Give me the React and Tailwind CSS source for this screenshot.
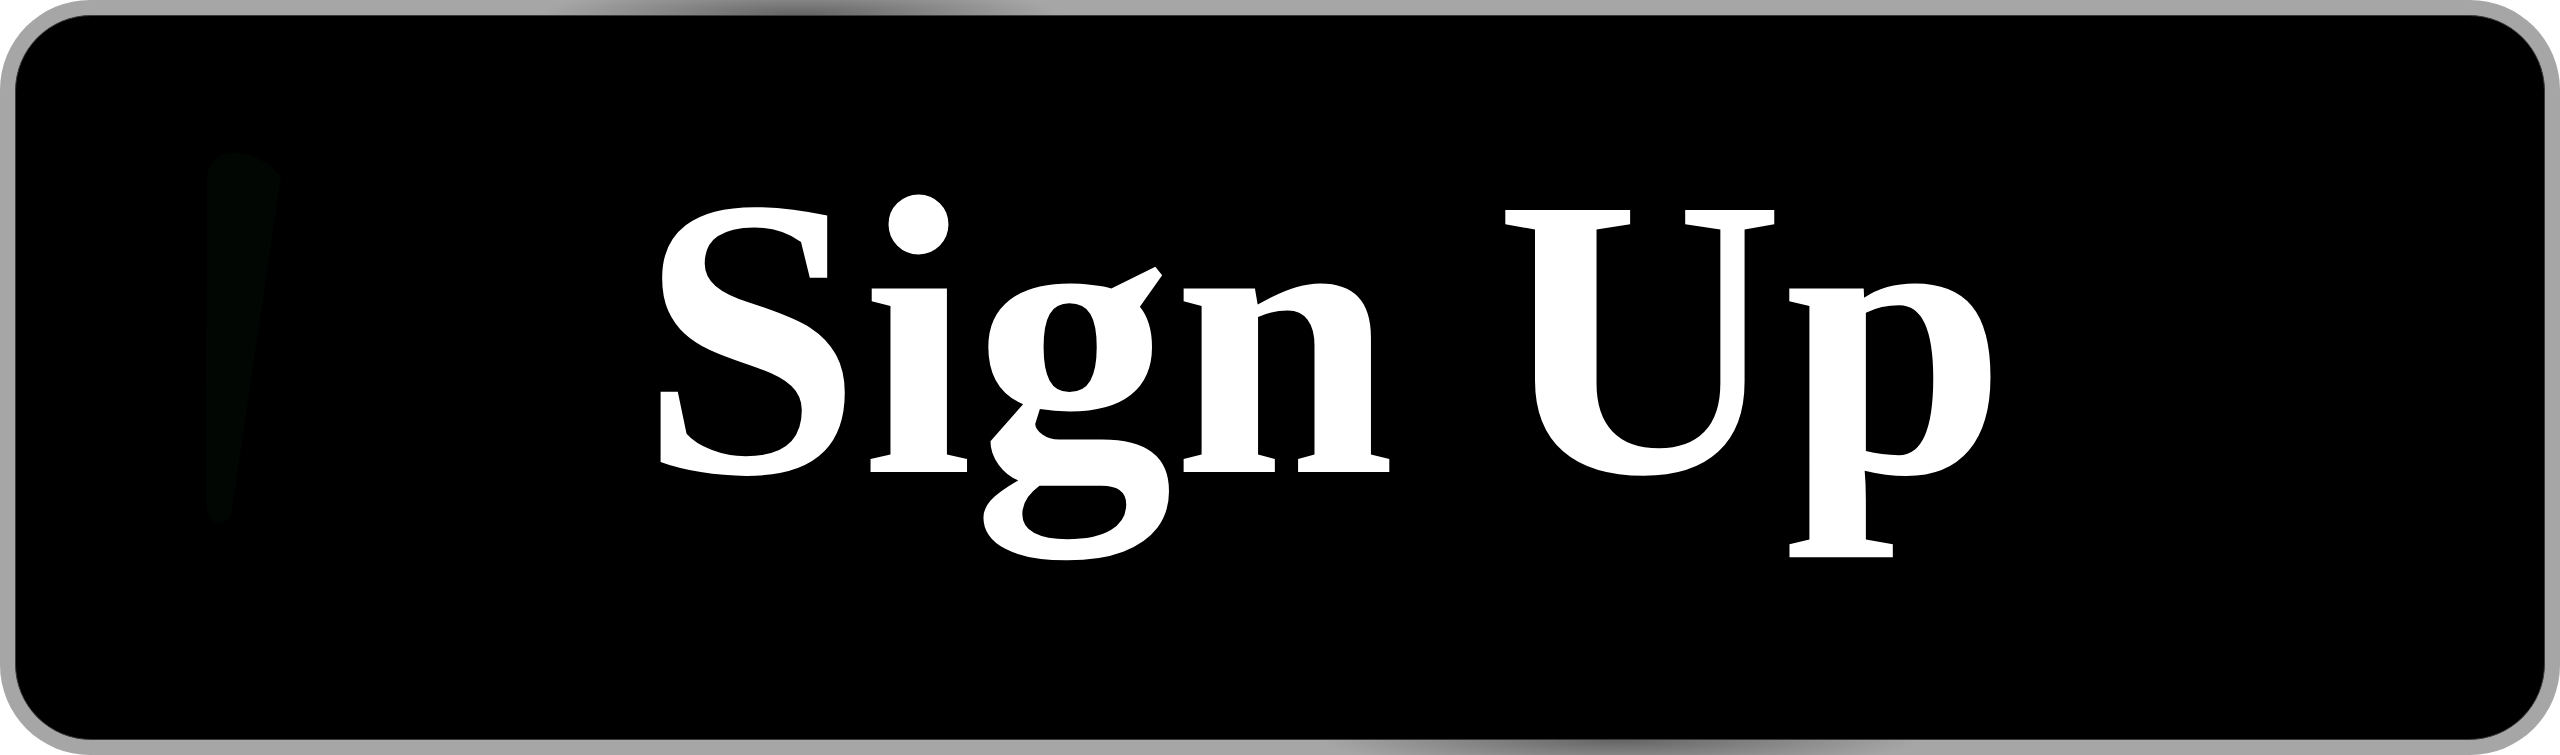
export default function App() {
  return (
    <div className="w-[2560px] h-[755px] bg-white">
      <div className="w-full h-full rounded-[90px] p-[15px] bg-[#a6a6a6] bg-[radial-gradient(ellipse_260px_30px_at_800px_15px,rgba(0,0,0,0.4),transparent),radial-gradient(ellipse_300px_30px_at_1620px_740px,rgba(0,0,0,0.4),transparent)]">
        <div className="relative w-full h-full rounded-[76px] bg-black border border-[#3a3a3a] flex items-center justify-center pl-[86px] pb-[79px]">
          {/* faint ghost of a logo on the left */}
          <svg className="absolute left-[175px] top-[120px]" width="100" height="400" viewBox="0 0 100 400">
            <path d="M16 40 C20 10 60 8 90 40 L40 380 C25 395 15 385 15 360 Z" fill="#010603" />
          </svg>
          <span className="font-['Liberation_Serif'] font-bold text-[400px] leading-none text-white whitespace-nowrap">
            Sign Up
          </span>
        </div>
      </div>
    </div>
  )
}
